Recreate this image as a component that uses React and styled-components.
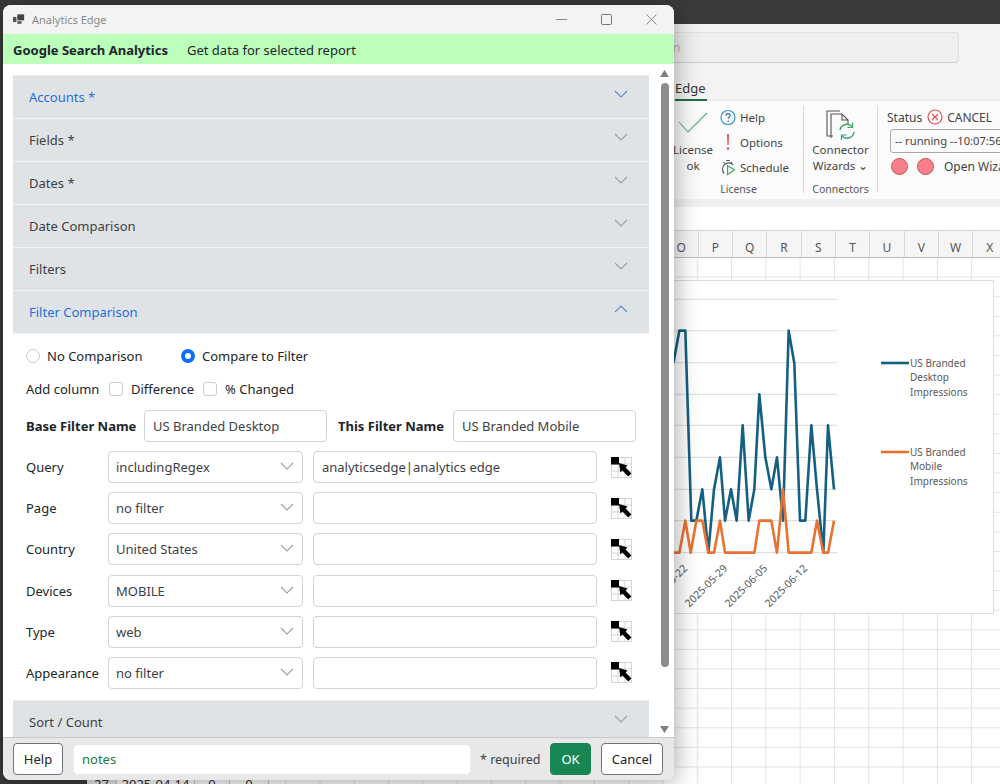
import React from "react";
import styled, { createGlobalStyle } from "styled-components";

const FONT = `"Noto Sans", "Open Sans", "Liberation Sans", sans-serif`;

const GlobalStyle = createGlobalStyle`
  html, body {
    margin: 0;
    padding: 0;
    background: #3b3b3b;
    font-family: ${FONT};
  }
  * {
    box-sizing: border-box;
  }
`;

const Desktop = styled.div`
  position: relative;
  width: 1000px;
  height: 784px;
  overflow: hidden;
  background: #3b3b3b;
`;

/* excel window behind the dialog */
const Excel = styled.div`
  margin-left: 87px;
  padding-top: 24px;
  height: 784px;
  display: flex;
  flex-direction: column;
`;

const SearchBand = styled.div`
  height: 52px;
  padding: 8px 41px 0 500px;
  background: #f3f3f3;
`;

const SearchBox = styled.div`
  height: 31px;
  padding-left: 85px;
  background: #efefef;
  border: 1px solid #e0e0e0;
  border-bottom-color: #d0d0d0;
  border-radius: 4px;
  font-size: 12px;
  line-height: 29px;
  color: #b5b5b5;
`;

const TabRow = styled.div`
  height: 25px;
  padding-left: 588px;
  background: #f3f3f3;
`;

const Tab = styled.div`
  display: inline-block;
  height: 20px;
  padding-right: 1px;
  border-bottom: 2px solid #1e7145;
  font-size: 13px;
  line-height: 15px;
  color: #333;
`;

const Ribbon = styled.div`
  height: 98px;
  padding-left: 587px;
  display: flex;
  align-items: flex-start;
  background: #fbfbfb;
  box-shadow: 0 1px 3px rgba(0, 0, 0, 0.2);
  font-size: 11.5px;
  color: #444;
`;

const Group = styled.div`
  width: ${(p) => p.$w}px;
  height: 87px;
  flex-shrink: 0;
  display: flex;
  flex-direction: column;
  margin-top: 5px;
  border-right: ${(p) => (p.$last ? "none" : "1px solid #d8d8d8")};
`;

const GroupBody = styled.div`
  height: 74px;
  flex-shrink: 0;
  display: flex;
`;

const GroupLabel = styled.div`
  height: 13px;
  text-align: center;
  font-size: 10.5px;
  line-height: 18px;
  color: #555;
`;

const BigButton = styled.div`
  width: 38px;
  padding-top: 6px;
  display: flex;
  flex-direction: column;
  align-items: center;
  line-height: 16px;
  text-align: center;
`;

const CheckSlot = styled.div`
  height: 30px;
`;

const SmallList = styled.div`
  margin: -1px 0 0 8px;
  display: flex;
  flex-direction: column;
`;

const SmallItem = styled.div`
  height: 25.5px;
  display: flex;
  align-items: center;
  gap: 4px;
`;

const IconSlot = styled.span`
  width: 16px;
  height: 18px;
  display: flex;
  align-items: center;
  justify-content: center;
`;

const WizardButton = styled.div`
  flex: 1;
  display: flex;
  flex-direction: column;
  align-items: center;
  line-height: 16px;
  padding-top: 4px;
`;

const StatusPane = styled.div`
  padding-left: 9px;
  width: 100%;
`;

const StatusLine = styled.div`
  height: 22px;
  display: flex;
  align-items: center;
  white-space: nowrap;
  font-size: 12px;
  margin-left: ${(p) => p.$ml || 0}px;
`;

const StatusBox = styled.div`
  width: 130px;
  height: 24px;
  margin: 1px 0 2px 3px;
  padding-left: 4px;
  border: 1px solid #aaa;
  border-radius: 3px;
  font-size: 11.2px;
  line-height: 22px;
  white-space: nowrap;
  overflow: hidden;
`;

const Dot = styled.span`
  width: 17px;
  height: 17px;
  flex-shrink: 0;
  margin-right: ${(p) => p.$gap}px;
  border-radius: 50%;
  background: #f9808a;
  border: 1px solid #c9525c;
`;

const FormulaBand = styled.div`
  padding-top: 8px;
  background: #f0f0f0;
`;

const FormulaBar = styled.div`
  height: 24px;
  background: #fff;
  border-bottom: 1px solid #d4d4d4;
`;

const ColumnHeader = styled.div`
  height: 27px;
  padding-left: 577.5px;
  display: flex;
  background: #f5f5f5;
  border-bottom: 1px solid #bdbdbd;
`;

const ColumnCell = styled.div`
  width: 34.3px;
  flex-shrink: 0;
  border-right: 1px solid #d8d8d8;
  text-align: center;
  font-size: 12px;
  line-height: 33px;
  color: #555;
`;

const Sheet = styled.div`
  position: relative;
  flex: 1;
  background-color: #fff;
  background-image:
    linear-gradient(to right, transparent 33.3px, #e2e2e2 33.3px),
    linear-gradient(to bottom, transparent 18.6px, #e2e2e2 18.6px);
  background-size: 34.3px 19.6px;
  background-position: 27.7px 0;
  display: flex;
  flex-direction: column;
  justify-content: flex-end;
`;

const SheetRow = styled.div`
  height: 4px;
  display: flex;
  overflow: hidden;
  font-size: 13px;
  line-height: 8px;
  color: #333;
`;

const SheetCell = styled.div`
  width: ${(p) => p.$w}px;
  flex-shrink: 0;
  text-align: center;
  background: ${(p) => (p.$head ? "#e8e8e8" : "#fff")};
  border-right: 1px solid #cfcfcf;
`;

const Chart = styled.svg`
  position: absolute;
  left: 553px;
  top: 22px;
  font-family: ${FONT};
`;

/* dialog */
const Dialog = styled.div`
  position: absolute;
  left: 3px;
  top: 5px;
  width: 671px;
  height: 775px;
  display: flex;
  flex-direction: column;
  overflow: hidden;
  border-radius: 8px;
  background: #fff;
  box-shadow: 0 2px 26px rgba(0, 0, 0, 0.38);
  color: #212529;
  font-size: 13px;
`;

const TitleBar = styled.div`
  height: 29px;
  flex-shrink: 0;
  padding-left: 10px;
  display: flex;
  align-items: center;
  background: #f3f3f3;
`;

const TitleText = styled.span`
  margin-left: 7px;
  font-size: 11px;
  color: #8a8a8a;
`;

const WindowButtons = styled.div`
  margin-left: auto;
  padding-right: 17px;
  display: flex;
  align-items: center;
  gap: 34px;
`;

const Banner = styled.div`
  height: 30px;
  flex-shrink: 0;
  padding: 1px 0 0 10px;
  display: flex;
  align-items: center;
  background: #bbffbb;
  font-size: 13px;
`;

const BannerTitle = styled.b`
  width: 174px;
  font-weight: 700;
`;

const Main = styled.div`
  flex: 1;
  min-height: 0;
  display: flex;
  background: #fff;
`;

const Content = styled.div`
  width: 652px;
  padding: 11px 6px 0 10px;
  overflow: hidden;
`;

const Accordion = styled.div`
  border-top: 1px solid #ececec;
`;

const AccordionHeader = styled.div`
  height: 43px;
  padding: 0 21px 0 16px;
  display: flex;
  align-items: center;
  justify-content: space-between;
  background: #e0e3e6;
  border-bottom: 1px solid #f2f3f4;
  font-size: 13px;
  color: ${(p) => (p.$active ? "#1f6fe0" : "#3a3f44")};

  svg {
    margin: 0 0 6px;
  }
`;

const AccordionBody = styled.div`
  padding: 13px 12px 12px 13px;
  height: 367px;
  border-bottom: 1px solid #f0f0f0;
  display: flex;
  flex-direction: column;
`;

const OptionRow = styled.div`
  height: 20px;
  display: flex;
  align-items: center;
  margin-bottom: ${(p) => p.$mb || 0}px;
`;

const Radio = styled.input.attrs({ type: "radio", readOnly: true })`
  appearance: none;
  width: 14px;
  height: 14px;
  margin: 0 7px 0 0;
  border-radius: 50%;
  border: 1px solid #ccc;
  background: #fff;

  &:checked {
    border: 4px solid #0d6efd;
  }
`;

const Check = styled.input.attrs({ type: "checkbox" })`
  appearance: none;
  width: 14px;
  height: 14px;
  margin: 0 8px 0 0;
  border-radius: 3px;
  border: 1px solid #ccc;
  background: #fff;
`;

const OptionText = styled.span`
  width: ${(p) => (p.$w ? `${p.$w}px` : "auto")};
  white-space: nowrap;
`;

const NameRow = styled.div`
  height: 32px;
  display: flex;
  align-items: center;
  margin-bottom: 9px;
`;

const NameLabel = styled.b`
  font-weight: 700;
  white-space: nowrap;
  width: ${(p) => p.$w}px;
  padding-left: ${(p) => p.$pl || 0}px;
`;

const FilterRow = styled.div`
  height: 32px;
  display: flex;
  align-items: center;
  margin-bottom: 9.2px;
`;

const RowLabel = styled.span`
  width: 82px;
  flex-shrink: 0;
`;

const TextField = styled.input.attrs({ type: "text", readOnly: true })`
  width: ${(p) => p.$w}px;
  height: ${(p) => p.$h || 32}px;
  flex-shrink: 0;
  padding: 0 8px;
  border: ${(p) => (p.$bare ? "none" : "1px solid #d3d3d3")};
  border-radius: 4px;
  background: #fff;
  outline: none;
  font-family: ${FONT};
  font-size: 13px;
  color: ${(p) => p.$color || "#3c4146"};
`;

const SelectWrap = styled.div`
  position: relative;
  width: 195px;
  height: 32px;
  flex-shrink: 0;
  margin-right: 10px;

  svg {
    position: absolute;
    right: 9px;
    top: 11px;
  }
`;

const Select = styled.select`
  appearance: none;
  width: 100%;
  height: 100%;
  padding: 0 7px;
  border: 1px solid #d3d3d3;
  border-radius: 4px;
  background: #fff;
  font-family: ${FONT};
  font-size: 13px;
  color: #3c4146;
`;

const PickerSlot = styled.span`
  margin-left: 14px;
  width: 21px;
  height: 21px;
`;

const Scrollbar = styled.div`
  flex: 1;
  padding-top: 6px;
  display: flex;
  flex-direction: column;
  align-items: center;
`;

const Thumb = styled.div`
  width: 8px;
  height: 584px;
  margin: 6px 0 58.5px;
  border-radius: 4px;
  background: #8c8c8c;
`;

const Footer = styled.div`
  height: 43px;
  flex-shrink: 0;
  padding: 0 10px;
  display: flex;
  align-items: center;
  background: #e8e8e8;
  border-top: 1px solid #c8c8c8;
`;

const FooterButton = styled.button`
  height: 32px;
  width: ${(p) => p.$w}px;
  padding: 0;
  border: 1px solid ${(p) => (p.$primary ? "#198754" : "#6c757d")};
  border-radius: 4px;
  background: ${(p) => (p.$primary ? "#198754" : "#fff")};
  color: ${(p) => (p.$primary ? "#fff" : "#212529")};
  font-family: ${FONT};
  font-size: 13px;
  margin-right: ${(p) => p.$mr || 0}px;
`;

const RequiredText = styled.span`
  width: 80px;
  padding-left: 10px;
  white-space: nowrap;
  font-size: 12.5px;
  color: #3c4146;
`;

const Chevron = ({ color = "#9aa0a6", up }) => (
  <svg width="14" height="8" viewBox="0 0 14 8" fill="none">
    <path d={up ? "M1 7L7 1L13 7" : "M1 1L7 7L13 1"} stroke={color} strokeWidth="1.1" />
  </svg>
);

const AppIcon = () => (
  <svg width="12" height="11" viewBox="0 0 14 12">
    <rect x="0" y="3" width="4" height="6" fill="#555" />
    <rect x="5" y="0" width="8" height="7" fill="#444" />
    <rect x="5" y="8" width="5" height="3" fill="#555" />
  </svg>
);

const MinIcon = () => (
  <svg width="11" height="11" viewBox="0 0 11 11">
    <path d="M0 5.5H11" stroke="#8a8a8a" strokeWidth="1.2" />
  </svg>
);

const MaxIcon = () => (
  <svg width="11" height="11" viewBox="0 0 11 11" fill="none">
    <rect x="0.5" y="0.5" width="10" height="10" rx="1" stroke="#777" />
  </svg>
);

const CloseIcon = () => (
  <svg width="11" height="11" viewBox="0 0 11 11">
    <path d="M0.5 0.5L10.5 10.5M10.5 0.5L0.5 10.5" stroke="#8a8a8a" strokeWidth="1" />
  </svg>
);

const PickerIcon = () => (
  <svg width="21" height="21" viewBox="0 0 21 21">
    <g stroke="#d4d4d4" strokeWidth="1" fill="none">
      <rect x="0.5" y="0.5" width="20" height="20" />
      <path d="M7 0V21M14 0V21M0 7H21M0 14H21" />
    </g>
    <rect x="0" y="0" width="8" height="7.5" fill="#000" />
    <path d="M8 6L16.5 8.5L14.6 10.4L20.4 16.4L17.2 19.6L11.4 13.6L9.4 15.6Z" fill="#000" />
  </svg>
);

const HelpIcon = () => (
  <svg width="17" height="17" viewBox="0 0 17 17" fill="none">
    <circle cx="8.5" cy="8.5" r="7.5" stroke="#2f8fd6" strokeWidth="1.2" />
    <path d="M6.2 6.6C6.2 5.2 7.2 4.4 8.5 4.4C9.8 4.4 10.8 5.2 10.8 6.4C10.8 8 8.6 8 8.6 10.2" stroke="#2f6fb0" strokeWidth="1.2" />
    <circle cx="8.6" cy="12.4" r="0.8" fill="#2f6fb0" />
  </svg>
);

const BangIcon = () => (
  <svg width="6" height="17" viewBox="0 0 6 17">
    <path d="M2 0H4L3.6 11H2.4Z" fill="#e0505a" />
    <circle cx="3" cy="14.5" r="1.3" fill="#e0505a" />
  </svg>
);

const TimerIcon = () => (
  <svg width="17" height="18" viewBox="0 0 17 18" fill="none">
    <path d="M4.5 14.8A6.6 6.6 0 1 1 14 5.6" stroke="#555" strokeWidth="1.2" />
    <path d="M6.5 1H10.5M3.5 3L5 4M12.5 2.5L11.5 4" stroke="#555" strokeWidth="1.2" />
    <path d="M8 6.5L15.5 11L8 16Z" stroke="#3fa66a" strokeWidth="1.2" fill="#e8f6ee" />
  </svg>
);

const CheckMark = () => (
  <svg width="30" height="22" viewBox="0 0 30 22" fill="none">
    <path d="M1 10L10 20L29 1" stroke="#5fae7c" strokeWidth="1.1" />
  </svg>
);

const WizardIcon = () => (
  <svg width="32" height="32" viewBox="0 0 32 32" fill="none">
    <path d="M8 26H2V1H15" stroke="#555" strokeWidth="1.1" />
    <path d="M6 28V4H17L23 10V14" stroke="#555" strokeWidth="1.1" />
    <path d="M17 4V10H23" stroke="#555" strokeWidth="1.1" />
    <path d="M15 20A7 7 0 0 1 27 16.5M29 22A7 7 0 0 1 17 26" stroke="#3fa66a" strokeWidth="1.5" />
    <path d="M27.5 12.5V17.5H22.5M16.5 30V25H21.5" stroke="#3fa66a" strokeWidth="1.2" />
  </svg>
);

const CancelIcon = () => (
  <svg width="16" height="16" viewBox="0 0 16 16" fill="none">
    <circle cx="8" cy="8" r="7" stroke="#e0505a" strokeWidth="1.2" />
    <path d="M5 5L11 11M11 5L5 11" stroke="#e0505a" strokeWidth="1.2" />
  </svg>
);

const BLUE = [[10,280],[28,182],[46,182],[64,752],[79,752],[97,658],[115,848],[132,658],[150,562],[165,752],[183,658],[200,752],[218,466],[236,752],[253,658],[268,373],[286,562],[304,658],[321,562],[339,752],[356,182],[373,280],[390,752],[406,752],[424,466],[441,658],[460,848],[474,466],[492,658]];
const ORANGE = [[10,848],[28,848],[46,752],[62,848],[79,752],[97,752],[115,848],[132,848],[150,752],[165,848],[253,848],[268,752],[304,752],[321,848],[339,658],[356,848],[424,848],[441,752],[460,848],[474,848],[492,752]];
const GRID_Y = [299.3, 330.7, 362.7, 394.3, 425.3, 457.3, 489.3, 520.7, 552.7];
const DATES = [["2025-05-22", 688], ["2025-05-29", 728], ["2025-06-05", 768], ["2025-06-12", 808]];
const LEGEND = [
  { color: "#156082", y: 363, lines: ["US Branded", "Desktop", "Impressions"] },
  { color: "#e97132", y: 452, lines: ["US Branded", "Mobile", "Impressions"] },
];

// chart svg sits at page x=640, y=280
const toPoints = (list) =>
  list.map(([x, y]) => `${30 + x / 3},${y / 3 - 10}`).join(" ");

const SalesChart = () => (
  <Chart width="354" height="334" viewBox="0 0 354 334">
    <rect x="0.5" y="0.5" width="353" height="333" fill="#fff" stroke="#dcdcdc" />
    {GRID_Y.map((y) => (
      <line key={y} x1="0" x2="197" y1={y - 280} y2={y - 280} stroke="#d9d9d9" />
    ))}
    <polyline points={toPoints(BLUE)} fill="none" stroke="#156082" strokeWidth="2.6" strokeLinejoin="round" />
    <polyline points={toPoints(ORANGE)} fill="none" stroke="#e97132" strokeWidth="2.6" strokeLinejoin="round" />
    {DATES.map(([label, x]) => (
      <text
        key={label}
        transform={`translate(${x - 640} 289) rotate(-45)`}
        textAnchor="end"
        fontSize="10.5"
        fill="#595959"
      >
        {label}
      </text>
    ))}
    {LEGEND.map((item) => (
      <g key={item.color}>
        <line x1="241" x2="269" y1={item.y - 280} y2={item.y - 280} stroke={item.color} strokeWidth="2.6" />
        {item.lines.map((line, i) => (
          <text key={line} x="270" y={item.y - 276 + i * 14.3} fontSize="10" fill="#595959">
            {line}
          </text>
        ))}
      </g>
    ))}
  </Chart>
);

const SECTIONS = ["Accounts *", "Fields *", "Dates *", "Date Comparison", "Filters"];
const FILTERS = [
  { label: "Query", value: "includingRegex", text: "analyticsedge|analytics edge" },
  { label: "Page", value: "no filter", text: "" },
  { label: "Country", value: "United States", text: "" },
  { label: "Devices", value: "MOBILE", text: "" },
  { label: "Type", value: "web", text: "" },
  { label: "Appearance", value: "no filter", text: "" },
];
const COLUMNS = ["O", "P", "Q", "R", "S", "T", "U", "V", "W", "X"];

export default function App() {
  return (
    <Desktop>
      <GlobalStyle />
      <Excel>
        <SearchBand>
          <SearchBox>n</SearchBox>
        </SearchBand>
        <TabRow>
          <Tab>Edge</Tab>
        </TabRow>
        <Ribbon>
          <Group $w={130}>
            <GroupBody>
              <BigButton>
                <CheckSlot><CheckMark /></CheckSlot>
                License
                <br />
                ok
              </BigButton>
              <SmallList>
                <SmallItem><IconSlot><HelpIcon /></IconSlot>Help</SmallItem>
                <SmallItem><IconSlot><BangIcon /></IconSlot>Options</SmallItem>
                <SmallItem><IconSlot><TimerIcon /></IconSlot>Schedule</SmallItem>
              </SmallList>
            </GroupBody>
            <GroupLabel>License</GroupLabel>
          </Group>
          <Group $w={74}>
            <GroupBody>
              <WizardButton>
                <WizardIcon />
                <span>Connector</span>
                <span>Wizards ⌄</span>
              </WizardButton>
            </GroupBody>
            <GroupLabel>Connectors</GroupLabel>
          </Group>
          <Group $w={130} $last>
            <GroupBody>
              <StatusPane>
                <StatusLine>
                  Status
                  <span style={{ width: 5 }} />
                  <CancelIcon />
                  <span style={{ width: 4 }} />
                  CANCEL
                </StatusLine>
                <StatusBox>-- running --10:07:56</StatusBox>
                <StatusLine $ml={4}>
                  <Dot $gap={9} />
                  <Dot $gap={10} />
                  Open Wizard
                </StatusLine>
              </StatusPane>
            </GroupBody>
          </Group>
        </Ribbon>
        <FormulaBand>
          <FormulaBar />
        </FormulaBand>
        <ColumnHeader>
          {COLUMNS.map((c) => (
            <ColumnCell key={c}>{c}</ColumnCell>
          ))}
        </ColumnHeader>
        <Sheet>
          <SalesChart />
          <SheetRow>
            <SheetCell $w={30} $head>27</SheetCell>
            <SheetCell $w={78}>2025-04-14</SheetCell>
            <SheetCell $w={35}>0</SheetCell>
            <SheetCell $w={39}>0</SheetCell>
          </SheetRow>
        </Sheet>
      </Excel>

      <Dialog>
        <TitleBar>
          <AppIcon />
          <TitleText>Analytics Edge</TitleText>
          <WindowButtons>
            <MinIcon />
            <MaxIcon />
            <CloseIcon />
          </WindowButtons>
        </TitleBar>
        <Banner>
          <BannerTitle>Google Search Analytics</BannerTitle>
          Get data for selected report
        </Banner>
        <Main>
          <Content>
            <Accordion>
              {SECTIONS.map((s, i) => (
                <AccordionHeader key={s} $active={i === 0}>
                  {s}
                  <Chevron color={i === 0 ? "#5b8bd6" : undefined} />
                </AccordionHeader>
              ))}
              <AccordionHeader $active>
                Filter Comparison
                <Chevron color="#5b8bd6" up />
              </AccordionHeader>
              <AccordionBody>
                <OptionRow $mb={15}>
                  <Radio name="cmp" />
                  <OptionText $w={134}>No Comparison</OptionText>
                  <Radio name="cmp" defaultChecked />
                  <OptionText>Compare to Filter</OptionText>
                </OptionRow>
                <OptionRow $mb={12}>
                  <OptionText $w={83}>Add column</OptionText>
                  <Check />
                  <OptionText $w={72}>Difference</OptionText>
                  <Check />
                  <OptionText>% Changed</OptionText>
                </OptionRow>
                <NameRow>
                  <NameLabel $w={118}>Base Filter Name</NameLabel>
                  <TextField $w={183} defaultValue="US Branded Desktop" />
                  <NameLabel $w={126} $pl={11}>This Filter Name</NameLabel>
                  <TextField $w={183} defaultValue="US Branded Mobile" />
                </NameRow>
                {FILTERS.map((f) => (
                  <FilterRow key={f.label}>
                    <RowLabel>{f.label}</RowLabel>
                    <SelectWrap>
                      <Select defaultValue={f.value}>
                        <option>{f.value}</option>
                      </Select>
                      <Chevron />
                    </SelectWrap>
                    <TextField $w={284} defaultValue={f.text} />
                    <PickerSlot><PickerIcon /></PickerSlot>
                  </FilterRow>
                ))}
              </AccordionBody>
              <AccordionHeader>
                Sort / Count
                <Chevron />
              </AccordionHeader>
            </Accordion>
          </Content>
          <Scrollbar>
            <svg width="9" height="7" viewBox="0 0 9 7"><path d="M4.5 0L9 7H0Z" fill="#7f7f7f" /></svg>
            <Thumb />
            <svg width="9" height="7" viewBox="0 0 9 7"><path d="M4.5 7L9 0H0Z" fill="#7f7f7f" /></svg>
          </Scrollbar>
        </Main>
        <Footer>
          <FooterButton $w={50} $mr={11}>Help</FooterButton>
          <TextField $w={396} $h={29} $color="#1e7a3c" $bare defaultValue="notes" />
          <RequiredText>* required</RequiredText>
          <FooterButton $w={41} $mr={10} $primary>OK</FooterButton>
          <FooterButton $w={62}>Cancel</FooterButton>
        </Footer>
      </Dialog>
    </Desktop>
  );
}
